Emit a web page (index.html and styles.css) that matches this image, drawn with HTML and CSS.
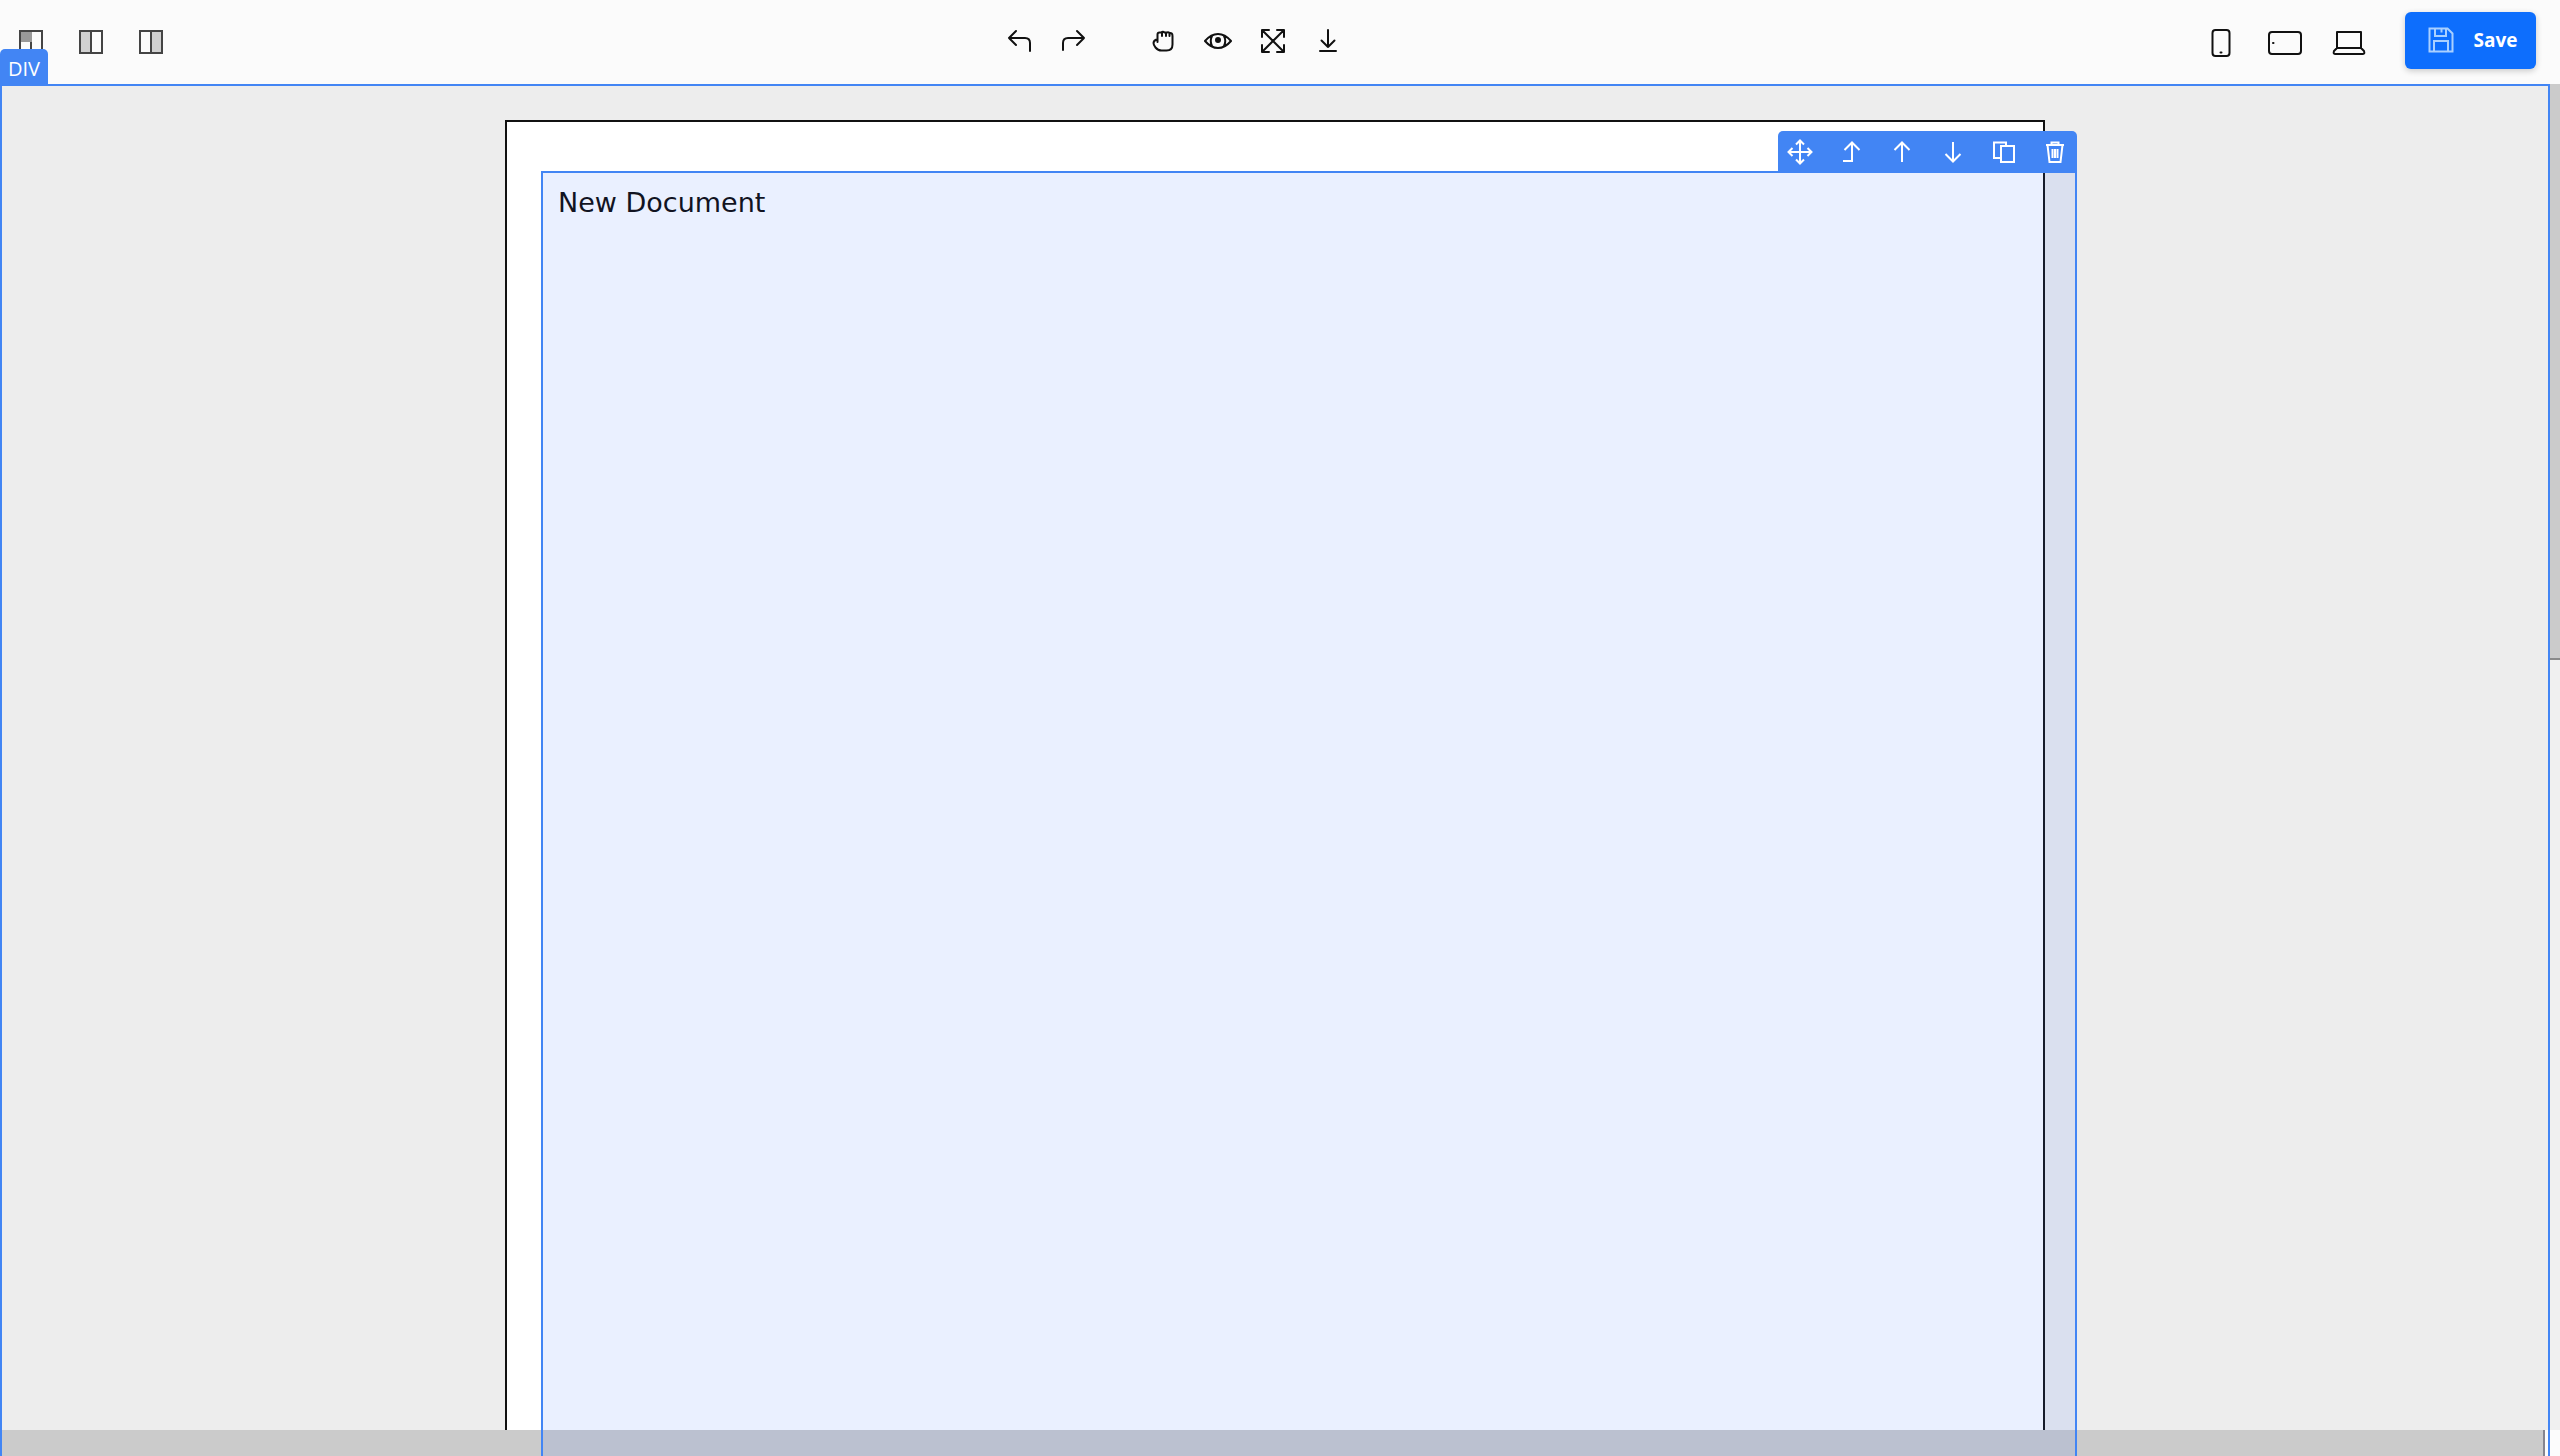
FILE: index.html
```html
<!DOCTYPE html>
<html lang="en">
<head>
<meta charset="utf-8">
<title>Page editor</title>
<link rel="stylesheet" href="styles.css">
</head>
<body>
<header class="topbar">
  <div class="group panels">
    <button class="tool" aria-label="Toggle both panels"><svg width="24" height="24" viewBox="0 0 24 24"><rect x="1" y="1" width="12" height="11" fill="#999"/><path d="M1 1h22v22H1zM12 12v11" fill="none" stroke="#444" stroke-width="2"/></svg></button>
    <button class="tool" aria-label="Toggle left panel"><svg width="24" height="24" viewBox="0 0 24 24"><rect x="1" y="1" width="11" height="22" fill="#d0d0d0"/><path d="M1 1h22v22H1zM12 1v22" fill="none" stroke="#444" stroke-width="2"/></svg></button>
    <button class="tool" aria-label="Toggle right panel"><svg width="24" height="24" viewBox="0 0 24 24"><rect x="12" y="1" width="11" height="22" fill="#d0d0d0"/><path d="M1 1h22v22H1zM12 1v22" fill="none" stroke="#444" stroke-width="2"/></svg></button>
  </div>
  <div class="group actions">
    <button class="tool" aria-label="Undo"><svg class="line" width="28" height="28" viewBox="0 0 28 28"><path d="M11 4 4 11l7 7M4 11h16q5 0 5 5v8"/></svg></button>
    <button class="tool" aria-label="Redo"><svg class="line" width="28" height="28" viewBox="0 0 28 28"><path d="M17 4 24 11l-7 7M24 11H8q-5 0-5 5v7"/></svg></button>
    <button class="tool section" aria-label="Drag"><svg class="line" width="28" height="28" viewBox="0 0 28 28"><path d="M8.500 15V7.500Q8.500 5.500 10.500 5.500H12Q14 4 15.500 5.500H18Q19.500 5 20.500 6Q23.500 5.500 23.500 9v8.500q0 6-6 6h-5q-3.500 0-6-3Q4.500 18 4.500 16q0-2.500 4-4M13 6v3M17 6v3M20.500 6.500V9"/></svg></button>
    <button class="tool" aria-label="Preview"><svg class="line" width="28" height="28" viewBox="0 0 28 28"><path d="M1 14Q7 7 14 7t13 7q-6 7-13 7T1 14zM8 9q-2.500 5 0 10M20 9q2.500 5 0 10"/><circle cx="14" cy="13" r="2" fill="#111"/></svg></button>
    <button class="tool" aria-label="Fullscreen"><svg class="line" width="28" height="28" viewBox="0 0 28 28"><path d="M4 4 24 24M24 4 4 24M3 10V3h7M18 3h7v7M25 18v7h-7M10 25H3v-7"/></svg></button>
    <button class="tool" aria-label="Download"><svg class="line" width="28" height="28" viewBox="0 0 28 28"><path d="M14 3v17M7.500 13.500 14 20l6.500-6.500M6 24h16"/></svg></button>
  </div>
  <div class="group devices">
    <button class="tool" aria-label="Mobile"><svg class="device" width="36" height="32" viewBox="0 0 36 32"><rect x="9.500" y="3" width="17" height="26" rx="3"/><path d="M17.500 25.500h1"/></svg></button>
    <button class="tool" aria-label="Tablet"><svg class="device" width="36" height="32" viewBox="0 0 36 32"><rect x="2" y="5" width="32" height="22" rx="3"/><path d="M6 16h.5"/></svg></button>
    <button class="tool" aria-label="Desktop"><svg class="device" width="36" height="32" viewBox="0 0 36 32"><path d="M6 21V5h24v16zM6 21l-3 3q-1 3 1 3h28q2 0 1-3l-3-3"/></svg></button>
    <button class="save"><svg width="26" height="26" viewBox="0 0 26 26"><path d="M1.500 1.500h18l5 5v18h-23zM7 2v7h11V2M13.500 2v3.500M6 24V14h14v10" fill="none" stroke="#a9d0ff" stroke-width="2"/></svg>Save</button>
  </div>
</header>
<main class="workspace">
  <span class="tag">DIV</span>
  <article class="paper">
    <section class="selected">
      <div class="toolbar">
        <button aria-label="Move"><svg width="26" height="26" viewBox="0 0 26 26"><path d="M13 2v22M2 13h22M9 5.500 13 1.500l4 4M9 20.500l4 4 4-4M5.500 9l-4 4 4 4M20.500 9l4 4-4 4"/></svg></button>
        <button aria-label="Select parent"><svg width="26" height="26" viewBox="0 0 26 26"><path d="M5 22h9V4M6.500 11 14 3.500l7.500 7.500"/></svg></button>
        <button aria-label="Move up"><svg width="26" height="26" viewBox="0 0 26 26"><path d="M13 23V4M5.500 11 13 3.500l7.500 7.500"/></svg></button>
        <button aria-label="Move down"><svg width="26" height="26" viewBox="0 0 26 26"><path d="M13 3v19M5.500 15 13 22.500l7.500-7.500"/></svg></button>
        <button aria-label="Duplicate"><svg width="26" height="26" viewBox="0 0 26 26"><path d="M10 19H3V3.500h12V7M10 7h13v16H10z"/></svg></button>
        <button aria-label="Delete"><svg width="26" height="26" viewBox="0 0 26 26"><path d="M4 6h18M9.500 6V3.500h7V6M5.500 6l2 17h11l2-17M10.500 10v9M13 10v9M15.500 10v9"/></svg></button>
      </div>
      <p class="title">New Document</p>
    </section>
  </article>
  <div class="scroll-y"><div class="thumb"></div></div>
  <div class="scroll-x"><div class="thumb"></div></div>
</main>
</body>
</html>
```
FILE: styles.css
```css
* { box-sizing: border-box; }

body {
  margin: 0;
  height: 100vh;
  display: flex;
  flex-direction: column;
  overflow: hidden;
  background: #ededed;
  font-family: "Open Sans", "Noto Sans", sans-serif;
}

button {
  padding: 0;
  border: 0;
  background: none;
  font: inherit;
  display: flex;
  align-items: center;
  justify-content: center;
  cursor: pointer;
}

svg { display: block; }

.topbar {
  flex: none;
  height: 84px;
  padding: 0 24px 4px 19px;
  display: flex;
  align-items: center;
  justify-content: space-between;
  background: #fbfbfb;
}

.group { display: flex; align-items: center; }
.panels { gap: 36px; padding-top: 3px; }
.actions { margin-right: 6px; padding-top: 2px; }
.actions .tool { width: 55px; height: 40px; }
.actions .section { margin-left: 34px; }
.devices .tool { width: 64px; height: 40px; padding-top: 5px; }

.line, .device {
  fill: none;
  stroke: #111;
  stroke-width: 2;
  stroke-linecap: round;
  stroke-linejoin: round;
}

.save {
  width: 131px;
  height: 57px;
  margin-left: 24px;
  padding-left: 4px;
  gap: 20px;
  border-radius: 6px;
  background: #0d6efd;
  box-shadow: 0 2px 6px rgba(0, 0, 0, .2);
  color: #fff;
  font-size: 19px;
  font-weight: 700;
}

.workspace {
  position: relative;
  flex: 1;
  min-height: 0;
  display: flex;
  justify-content: center;
  padding: 36px 10px 0 0;
}

/* outline of the hovered block, drawn above the scroll bars */
.workspace::after {
  content: "";
  position: absolute;
  z-index: 1;
  inset: 0 10px 0 0;
  border: solid #4285f4;
  border-width: 2px 2px 0;
  pointer-events: none;
}

.tag {
  position: absolute;
  z-index: 3;
  left: 0;
  bottom: 100%;
  height: 35px;
  padding: 0 8px;
  border-radius: 5px 5px 0 0;
  background: #4285f4;
  color: #fff;
  font-size: 20px;
  line-height: 39px;
}

.paper {
  width: 100%;
  max-width: 1540px;
  display: flex;
  padding: 49px 0 0 34px;
  border: solid #111;
  border-width: 2px 2px 0;
  background: #fff;
}

.selected {
  position: relative;
  z-index: 2;
  flex: 1;
  margin-right: -34px;
  padding: 10px 15px;
  border: solid #4285f4;
  border-width: 2px 2px 0;
  background: rgba(66, 120, 255, .11);
}

.title {
  margin: 0;
  color: #111322;
  font-family: "DejaVu Sans", sans-serif;
  font-size: 27px;
  line-height: 40px;
}

.toolbar {
  position: absolute;
  right: -2px;
  bottom: 100%;
  height: 42px;
  padding: 3px 0 0;
  display: flex;
  gap: 7px;
  border-radius: 5px 5px 0 0;
  background: #4285f4;
}

.toolbar button { width: 44px; height: 36px; }

.toolbar svg {
  fill: none;
  stroke: #fff;
  stroke-width: 2;
}

.scroll-y {
  position: absolute;
  inset: 0 0 0 auto;
  width: 12px;
  background: #f0f0f0;
}

.scroll-y .thumb {
  height: 42%;
  border-bottom: 2px solid #8a8a8a;
  background: #cbcbcb;
}

.scroll-x {
  position: absolute;
  inset: auto 0 0;
  height: 26px;
  padding-right: 15px;
  background: #fcfcfc;
}

.scroll-x .thumb {
  height: 100%;
  border-right: 2px solid #85858f;
  background: #cbcbcb;
}
```
